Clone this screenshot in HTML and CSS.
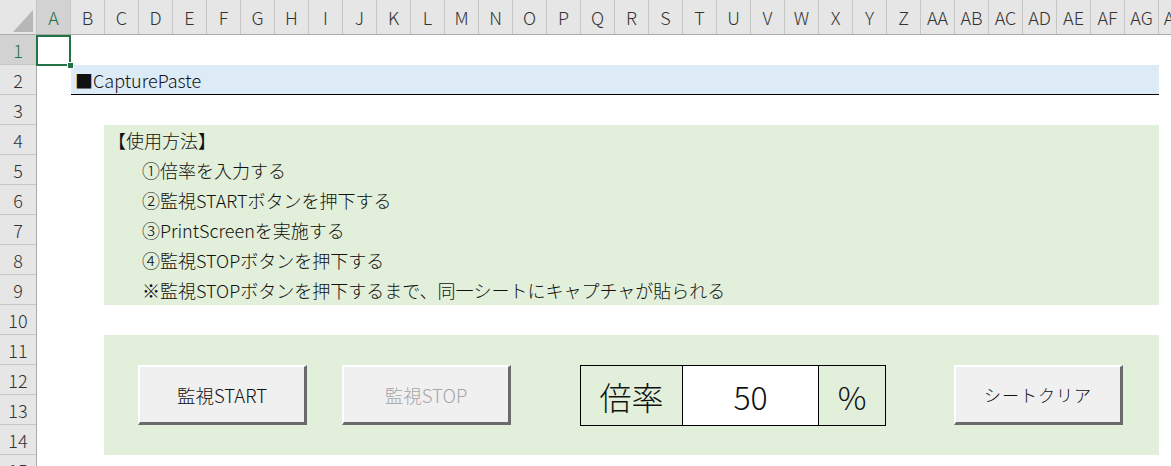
FILE: index.html
```html
<!DOCTYPE html>
<html lang="ja">
<head>
<meta charset="utf-8">
<title>CapturePaste</title>
<link rel="stylesheet" href="styles.css">
</head>
<body>
<div class="sheet">
  <div class="corner">
    <svg class="tri" width="37" height="35" viewBox="0 0 37 35"><polygon points="33,10 33,32 13,32" fill="#b7b7b7"/></svg>
  </div>
  <div class="colhead">
    <div class="ch sel-h">A</div><div class="ch">B</div><div class="ch">C</div><div class="ch">D</div><div class="ch">E</div><div class="ch">F</div><div class="ch">G</div><div class="ch">H</div><div class="ch">I</div><div class="ch">J</div><div class="ch">K</div><div class="ch">L</div><div class="ch">M</div><div class="ch">N</div><div class="ch">O</div><div class="ch">P</div><div class="ch">Q</div><div class="ch">R</div><div class="ch">S</div><div class="ch">T</div><div class="ch">U</div><div class="ch">V</div><div class="ch">W</div><div class="ch">X</div><div class="ch">Y</div><div class="ch">Z</div><div class="ch">AA</div><div class="ch">AB</div><div class="ch">AC</div><div class="ch">AD</div><div class="ch">AE</div><div class="ch">AF</div><div class="ch">AG</div><div class="ch">AH</div>
  </div>
  <div class="rowhead">
    <div class="rh sel-h">1</div><div class="rh">2</div><div class="rh">3</div><div class="rh">4</div><div class="rh">5</div><div class="rh">6</div><div class="rh">7</div><div class="rh">8</div><div class="rh">9</div><div class="rh">10</div><div class="rh">11</div><div class="rh">12</div><div class="rh">13</div><div class="rh">14</div><div class="rh">15</div>
  </div>

  <div class="title">■CapturePaste</div>

  <div class="usage">
    <p class="head">【使用方法】</p>
    <p>①倍率を入力する</p>
    <p>②監視STARTボタンを押下する</p>
    <p>③PrintScreenを実施する</p>
    <p>④監視STOPボタンを押下する</p>
    <p>※監視STOPボタンを押下するまで、同一シートにキャプチャが貼られる</p>
  </div>

  <div class="controls"></div>

  <div class="btn btn-start">監視START</div>
  <div class="btn btn-stop">監視STOP</div>
  <div class="ratio">
    <div class="rc rc-label">倍率</div>
    <div class="rc rc-value">50</div>
    <div class="rc rc-unit">%</div>
  </div>
  <div class="btn btn-clear">シートクリア</div>

  <div class="selection"><span class="handle"></span></div>
</div>
</body>
</html>
```

FILE: styles.css
```css
* { box-sizing: border-box; }

html, body {
  margin: 0;
  padding: 0;
  background: #ffffff;
}

body {
  width: 1171px;
  height: 466px;
  overflow: hidden;
  font-family: "Noto Sans CJK JP", "Noto Sans", sans-serif;
  font-weight: 300;
  color: #111;
}

.sheet {
  display: grid;
  grid-template-columns: 37px repeat(34, 34px);
  grid-template-rows: 35px repeat(15, 30px);
  width: 1193px;
}

.corner {
  grid-column: 1;
  grid-row: 1;
  background: #e6e6e6;
  border-right: 1px solid #c4c4c4;
  border-bottom: 1px solid #ababab;
  overflow: hidden;
}

.tri { display: block; }

.colhead {
  grid-column: 2 / -1;
  grid-row: 1;
  display: flex;
  background: #e6e6e6;
  border-bottom: 1px solid #ababab;
}

.ch {
  flex: 0 0 34px;
  display: flex;
  align-items: center;
  justify-content: center;
  border-right: 1px solid #c6c6c6;
  font-size: 18px;
  color: #333;
}

.rowhead {
  grid-column: 1;
  grid-row: 2 / -1;
  display: flex;
  flex-direction: column;
  background: #e6e6e6;
  border-right: 1px solid #ababab;
}

.rh {
  flex: 0 0 30px;
  display: flex;
  align-items: center;
  justify-content: center;
  border-bottom: 1px solid #c6c6c6;
  font-size: 18px;
  color: #333;
}

.sel-h {
  background: #d2d2d2;
  color: #217346;
}

.title {
  grid-column: 3 / 35;
  grid-row: 3;
  background: #ddebf7;
  border-bottom: 1px solid #000;
  display: flex;
  align-items: center;
  padding-left: 4px;
  font-size: 18px;
  color: #111;
}

.usage {
  grid-column: 4 / 35;
  grid-row: 5 / 11;
  background: #e2efda;
  display: flex;
  flex-direction: column;
  margin-left: -1px;
}

.usage p {
  margin: 0;
  height: 30px;
  line-height: 30px;
  font-size: 18px;
  padding-left: 38px;
  white-space: nowrap;
}

.usage p.head { padding-left: 4px; }

.controls {
  grid-column: 4 / 35;
  grid-row: 12 / 16;
  background: #e2efda;
  margin-left: -1px;
}

.btn {
  grid-row: 13 / 15;
  display: flex;
  align-items: center;
  justify-content: center;
  background: #f0f0f0;
  border-top: 2px solid #ffffff;
  border-left: 2px solid #ffffff;
  border-right: 3px solid #6b6b6b;
  border-bottom: 3px solid #6b6b6b;
  margin: 0 2px 0 -1px;
  font-size: 18.5px;
  color: #111;
  white-space: nowrap;
}

.btn-start { grid-column: 5 / 10; }
.btn-stop { grid-column: 11 / 16; color: #a6a6a6; }
.btn-clear { grid-column: 29 / 34; font-size: 17px; letter-spacing: 1px; }

.ratio {
  grid-column: 18 / 27;
  grid-row: 13 / 15;
  display: grid;
  grid-template-columns: 102px 136px 1fr;
  border: 1px solid #000;
  margin: 0 1px -1px -1px;
}

.rc {
  display: flex;
  align-items: center;
  justify-content: center;
  font-size: 32px;
  color: #111;
}

.rc-label { border-right: 1px solid #000; }
.rc-value { background: #ffffff; border-right: 1px solid #000; }

.selection {
  grid-column: 2;
  grid-row: 2;
  border: 2px solid #217346;
  margin: 0 0 -1px -1px;
  position: relative;
}

.handle {
  position: absolute;
  right: -5px;
  bottom: -5px;
  width: 7px;
  height: 7px;
  background: #217346;
  border: 1px solid #ffffff;
}
```
